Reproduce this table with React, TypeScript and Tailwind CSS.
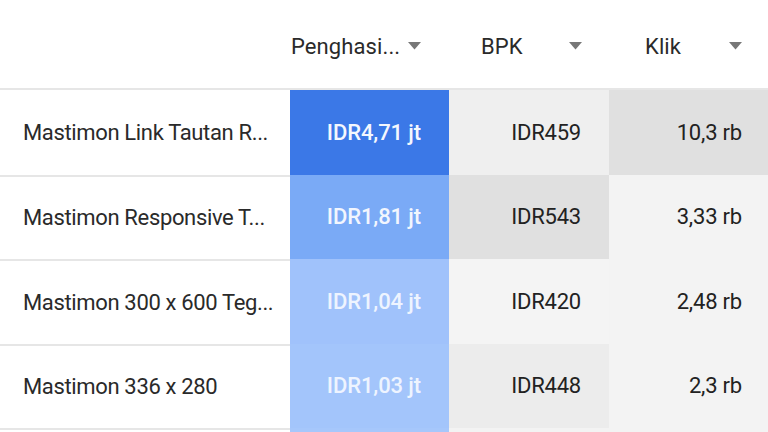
import React from "react";

type Row = {
  name: string;
  rev: string;
  bpk: string;
  klik: string;
  revBg: string;
  revText: string;
  bpkBg: string;
  klikBg: string;
};

const rows: Row[] = [
  { name: "Mastimon Link Tautan R...", rev: "IDR4,71 jt", bpk: "IDR459", klik: "10,3 rb", revBg: "bg-[#3b78e7]", revText: "text-[#f4f7fe]", bpkBg: "bg-[#efefef]", klikBg: "bg-[#e0e0e0]" },
  { name: "Mastimon Responsive T...", rev: "IDR1,81 jt", bpk: "IDR543", klik: "3,33 rb", revBg: "bg-[#7aaaf6]", revText: "text-[#f2f6fe]", bpkBg: "bg-[#e0e0e0]", klikBg: "bg-[#f3f3f3]" },
  { name: "Mastimon 300 x 600 Teg...", rev: "IDR1,04 jt", bpk: "IDR420", klik: "2,48 rb", revBg: "bg-[#a0c2fb]", revText: "text-[#eef4ff]", bpkBg: "bg-[#f4f4f4]", klikBg: "bg-[#f3f3f3]" },
  { name: "Mastimon 336 x 280", rev: "IDR1,03 jt", bpk: "IDR448", klik: "2,3 rb", revBg: "bg-[#a3c5fb]", revText: "text-[#eef4ff]", bpkBg: "bg-[#ececec]", klikBg: "bg-[#f3f3f3]" },
];

function Tri() {
  return (
    <svg width="13" height="8" viewBox="0 0 13 8" className="shrink-0">
      <path d="M0 0 L13 0 L6.5 7.5 Z" fill="#777" />
    </svg>
  );
}

export default function App() {
  return (
    <div
      className="w-[768px] h-[432px] overflow-hidden bg-white text-[#2a2a2a]"
      style={{ fontFamily: "Roboto, 'Liberation Sans', sans-serif" }}
    >
      {/* header */}
      <div className="flex h-[90px] border-b-2 border-[#e6e6e6]">
        <div className="w-[290px] shrink-0" />
        <div className="w-[159px] shrink-0 flex items-center justify-between pt-[4px] pl-[1px] pr-[28px] text-[22px] tracking-[0.1px]">
          <span>Penghasi...</span>
          <Tri />
        </div>
        <div className="w-[160px] shrink-0 flex items-center justify-between pt-[4px] pl-[32px] pr-[27px] text-[22px] tracking-[0.1px]">
          <span>BPK</span>
          <Tri />
        </div>
        <div className="w-[159px] shrink-0 flex items-center justify-between pt-[4px] pl-[36px] pr-[26px] text-[22px] tracking-[0.1px]">
          <span>Klik</span>
          <Tri />
        </div>
      </div>
      {rows.map((r, i) => (
        <div key={i} className="flex h-[84.5px]">
          <div
            className={`w-[290px] shrink-0 flex items-center pl-[23px] text-[22px] tracking-[-0.35px] whitespace-nowrap ${i > 0 ? "border-t-2 border-[#e6e6e6]" : ""}`}
          >
            {r.name}
          </div>
          <div className={`w-[159px] shrink-0 flex items-center justify-end pr-[28px] text-[22px] font-medium tracking-[-0.1px] ${r.revBg} ${r.revText}`}>
            {r.rev}
          </div>
          <div className={`w-[160px] shrink-0 flex items-center justify-end pr-[28px] text-[22px] tracking-[-0.2px] text-[#222] ${r.bpkBg}`}>
            {r.bpk}
          </div>
          <div className={`w-[159px] shrink-0 flex items-center justify-end pr-[26px] text-[22px] tracking-[-0.2px] text-[#222] ${r.klikBg}`}>
            {r.klik}
          </div>
        </div>
      ))}
      <div className="flex h-[84.5px]">
        <div className="w-[290px] shrink-0 border-t-2 border-[#e6e6e6]" />
        <div className="w-[159px] shrink-0 bg-[#a6c7fb]" />
        <div className="w-[160px] shrink-0 bg-[#f3f3f3]" />
        <div className="w-[159px] shrink-0 bg-[#f3f3f3]" />
      </div>
    </div>
  );
}
